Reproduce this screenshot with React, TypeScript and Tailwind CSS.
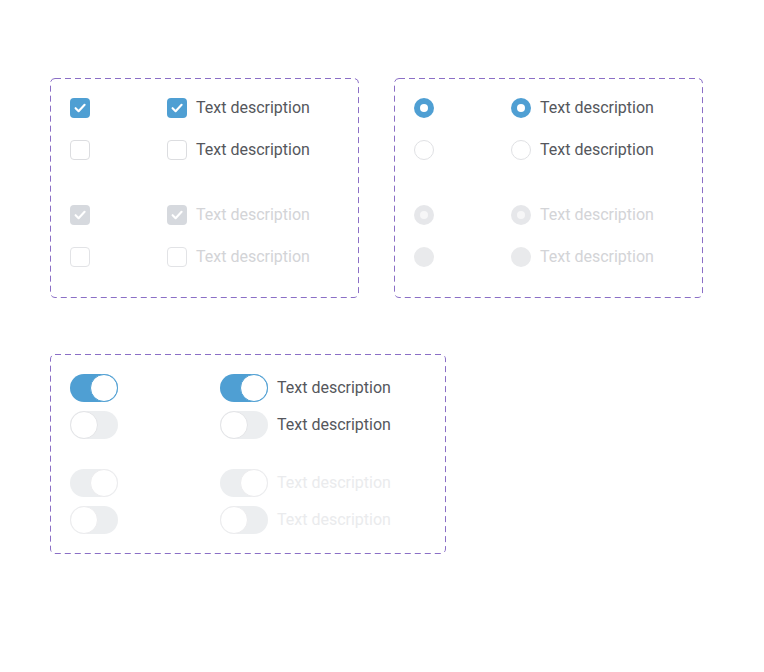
const font = { fontFamily: 'Roboto, "Noto Sans", sans-serif' }

type State = { on: boolean; disabled?: boolean }

function Check({ on, disabled }: State) {
  if (on) {
    return (
      <span
        className={`flex h-5 w-5 items-center justify-center rounded-[4px] ${
          disabled ? 'bg-[#d6d9de]' : 'bg-[#4f9fd3]'
        }`}
      >
        <svg width="14" height="14" viewBox="0 0 14 14" fill="none">
          <path d="M2.6 7.2l3 3L11.6 3.8" stroke="white" strokeWidth="2.1" strokeLinecap="round" strokeLinejoin="round" />
        </svg>
      </span>
    )
  }
  return (
    <span
      className={`block h-5 w-5 rounded-[4px] border bg-white ${
        disabled ? 'border-[#e2e3e6]' : 'border-[#dcdde0]'
      }`}
    />
  )
}

function Radio({ on, disabled }: State) {
  if (on) {
    return (
      <span
        className={`flex h-5 w-5 items-center justify-center rounded-full ${
          disabled ? 'bg-[#e6e7ea]' : 'bg-[#4f9fd3]'
        }`}
      >
        <span className={`h-2 w-2 rounded-full ${disabled ? 'bg-[#f6f6f7]' : 'bg-white'}`} />
      </span>
    )
  }
  return disabled ? (
    <span className="block h-5 w-5 rounded-full bg-[#e9eaec]" />
  ) : (
    <span className="block h-5 w-5 rounded-full border border-[#e0e1e4] bg-white" />
  )
}

function Toggle({ on, disabled }: State) {
  const track = on && !disabled ? 'bg-[#4f9fd3] justify-end' : on ? 'bg-[#eceef0] justify-end' : 'bg-[#eceef0] justify-start'
  const knob = on && !disabled ? 'border-[#4f9fd3]' : disabled ? 'border-[#ececee]' : 'border-[#e3e4e7]'
  return (
    <span className={`flex h-7 w-12 items-center rounded-full ${track}`}>
      <span className={`h-7 w-7 rounded-full border-[1.5px] bg-white ${knob}`} />
    </span>
  )
}

function Label({ children, tone }: { children: string; tone: string }) {
  return <span className={`text-[16px] leading-5 ${tone}`}>{children}</span>
}

// dashed outline with longer dashes than the css border-dashed gives
function DashedFrame({ className, children }: { className: string; children: React.ReactNode }) {
  return (
    <div className={`relative ${className}`}>
      <svg className="pointer-events-none absolute inset-0 h-full w-full" fill="none">
        <rect x="0.5" y="0.5" width="calc(100% - 1px)" height="calc(100% - 1px)" rx="4.5" stroke="#8b6fc6" strokeDasharray="6 4" />
      </svg>
      {children}
    </div>
  )
}

const rows: State[] = [
  { on: true },
  { on: false },
  { on: true, disabled: true },
  { on: false, disabled: true },
]

function SelectionPanel({ kind }: { kind: 'check' | 'radio' }) {
  const Control = kind === 'check' ? Check : Radio
  return (
    <DashedFrame className="w-[309px] pl-5 pt-5 pb-[31px]">
      <div className="flex flex-col gap-[22px]">
        {rows.map((r, i) => (
          <div key={i} className={`flex items-center ${i === 2 ? 'mt-[23px]' : ''}`}>
            <div className="w-[97px]">
              <Control {...r} />
            </div>
            <div className="flex items-center gap-[9px]">
              <Control {...r} />
              <Label tone={r.disabled ? 'text-[#d3d4d7]' : 'text-[#55575c]'}>Text description</Label>
            </div>
          </div>
        ))}
      </div>
    </DashedFrame>
  )
}

function TogglePanel() {
  return (
    <DashedFrame className="w-[396px] pl-5 py-5">
      <div className="flex flex-col gap-[9px]">
        {rows.map((r, i) => (
          <div key={i} className={`flex items-center ${i === 2 ? 'mt-[21px]' : ''}`}>
            <div className="w-[150px]">
              <Toggle {...r} />
            </div>
            <div className="flex items-center gap-[9px]">
              <Toggle {...r} />
              <Label tone={r.disabled ? 'text-[#eaebed]' : 'text-[#55575c]'}>Text description</Label>
            </div>
          </div>
        ))}
      </div>
    </DashedFrame>
  )
}

export default function App() {
  return (
    <div className="min-h-[672px] w-[764px] bg-white pl-[50px] pt-[78px]" style={font}>
      <div className="flex gap-[35px]">
        <SelectionPanel kind="check" />
        <SelectionPanel kind="radio" />
      </div>
      <div className="mt-[56px]">
        <TogglePanel />
      </div>
    </div>
  )
}
